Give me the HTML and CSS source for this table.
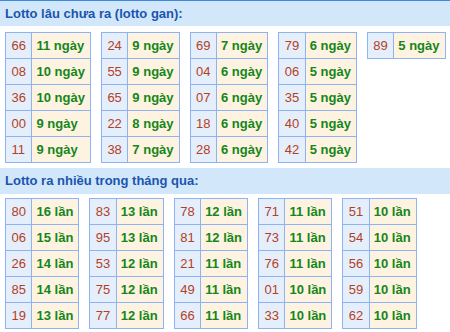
FILE: index.html
```html
<!DOCTYPE html>
<html lang="vi">
<head>
<meta charset="utf-8">
<title>Lotto</title>
<link rel="stylesheet" href="styles.css">
</head>
<body>
<div class="box">
  <h2 class="title first">Lotto lâu chưa ra (lotto gan):</h2>
  <div class="tables">
    <table class="lt">
      <tr><td class="n">66</td><td class="v">11 ngày</td></tr>
      <tr><td class="n">08</td><td class="v">10 ngày</td></tr>
      <tr><td class="n">36</td><td class="v">10 ngày</td></tr>
      <tr><td class="n">00</td><td class="v">9 ngày</td></tr>
      <tr><td class="n">11</td><td class="v">9 ngày</td></tr>
    </table>
    <table class="lt">
      <tr><td class="n">24</td><td class="v">9 ngày</td></tr>
      <tr><td class="n">55</td><td class="v">9 ngày</td></tr>
      <tr><td class="n">65</td><td class="v">9 ngày</td></tr>
      <tr><td class="n">22</td><td class="v">8 ngày</td></tr>
      <tr><td class="n">38</td><td class="v">7 ngày</td></tr>
    </table>
    <table class="lt">
      <tr><td class="n">69</td><td class="v">7 ngày</td></tr>
      <tr><td class="n">04</td><td class="v">6 ngày</td></tr>
      <tr><td class="n">07</td><td class="v">6 ngày</td></tr>
      <tr><td class="n">18</td><td class="v">6 ngày</td></tr>
      <tr><td class="n">28</td><td class="v">6 ngày</td></tr>
    </table>
    <table class="lt">
      <tr><td class="n">79</td><td class="v">6 ngày</td></tr>
      <tr><td class="n">06</td><td class="v">5 ngày</td></tr>
      <tr><td class="n">35</td><td class="v">5 ngày</td></tr>
      <tr><td class="n">40</td><td class="v">5 ngày</td></tr>
      <tr><td class="n">42</td><td class="v">5 ngày</td></tr>
    </table>
    <table class="lt">
      <tr><td class="n">89</td><td class="v">5 ngày</td></tr>
    </table>
  </div>
  <h2 class="title second">Lotto ra nhiều trong tháng qua:</h2>
  <div class="tables">
    <table class="lt">
      <tr><td class="n">80</td><td class="v">16 lần</td></tr>
      <tr><td class="n">06</td><td class="v">15 lần</td></tr>
      <tr><td class="n">26</td><td class="v">14 lần</td></tr>
      <tr><td class="n">85</td><td class="v">14 lần</td></tr>
      <tr><td class="n">19</td><td class="v">13 lần</td></tr>
    </table>
    <table class="lt">
      <tr><td class="n">83</td><td class="v">13 lần</td></tr>
      <tr><td class="n">95</td><td class="v">13 lần</td></tr>
      <tr><td class="n">53</td><td class="v">12 lần</td></tr>
      <tr><td class="n">75</td><td class="v">12 lần</td></tr>
      <tr><td class="n">77</td><td class="v">12 lần</td></tr>
    </table>
    <table class="lt">
      <tr><td class="n">78</td><td class="v">12 lần</td></tr>
      <tr><td class="n">81</td><td class="v">12 lần</td></tr>
      <tr><td class="n">21</td><td class="v">11 lần</td></tr>
      <tr><td class="n">49</td><td class="v">11 lần</td></tr>
      <tr><td class="n">66</td><td class="v">11 lần</td></tr>
    </table>
    <table class="lt">
      <tr><td class="n">71</td><td class="v">11 lần</td></tr>
      <tr><td class="n">73</td><td class="v">11 lần</td></tr>
      <tr><td class="n">76</td><td class="v">11 lần</td></tr>
      <tr><td class="n">01</td><td class="v">10 lần</td></tr>
      <tr><td class="n">33</td><td class="v">10 lần</td></tr>
    </table>
    <table class="lt">
      <tr><td class="n">51</td><td class="v">10 lần</td></tr>
      <tr><td class="n">54</td><td class="v">10 lần</td></tr>
      <tr><td class="n">56</td><td class="v">10 lần</td></tr>
      <tr><td class="n">59</td><td class="v">10 lần</td></tr>
      <tr><td class="n">62</td><td class="v">10 lần</td></tr>
    </table>
  </div>
</div>
</body>
</html>
```

FILE: styles.css
```css
html, body {
  margin: 0;
  padding: 0;
  background: #ffffff;
}
body {
  font-family: "Liberation Sans", Arial, sans-serif;
  font-size: 13px;
}
.box {
  width: 450px;
}
.title {
  margin: 0;
  background: #d3e7fb;
  color: #1a55ae;
  font-size: 13px;
  font-weight: bold;
  line-height: 25px;
  padding: 0 5px;
}
.title.first {
  border-top: 1px solid #3a8be0;
  height: 25px;
  margin-bottom: 6px;
}
.title.second {
  height: 26px;
  line-height: 26px;
  margin-top: 5px;
  margin-bottom: 4px;
}
.tables {
  display: flex;
  align-items: flex-start;
  gap: 10px;
  padding-left: 5px;
}
.lt {
  border-collapse: collapse;
}
.lt td {
  border: 1px solid #8db3f4;
  line-height: 15px;
  height: 15px;
  text-align: left;
  white-space: nowrap;
}
.lt .n {
  padding: 5px 5.5px;
  background: #e5effc;
  color: #b3401f;
}
.lt .v {
  padding: 5px 5px 5px 4px;
  background: #fef3e1;
  color: #14861a;
  font-weight: bold;
}
```
